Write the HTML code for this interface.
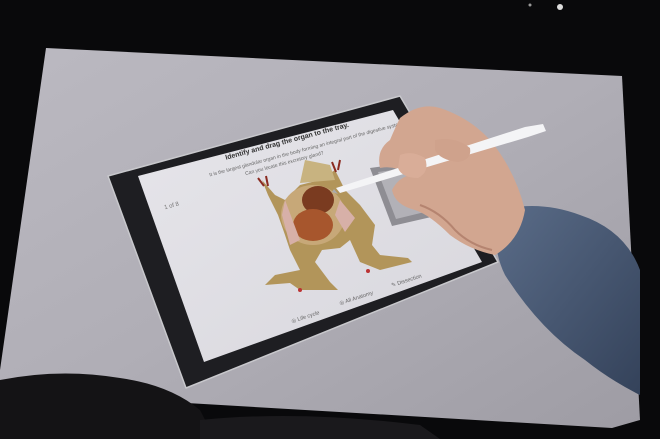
<!DOCTYPE html>
<html><head><meta charset="utf-8"><style>
html,body{margin:0;padding:0;background:#0a0a0c;width:660px;height:439px;overflow:hidden}
svg{display:block}
</style></head><body>
<svg width="660" height="439" viewBox="0 0 660 439" xmlns="http://www.w3.org/2000/svg">
<defs>
<linearGradient id="tbl" x1="0" y1="0" x2="1" y2="1">
<stop offset="0" stop-color="#bbb9c1"/><stop offset="0.5" stop-color="#b0aeb6"/><stop offset="1" stop-color="#9e9ca4"/>
</linearGradient>
<linearGradient id="scr" x1="0" y1="0" x2="1" y2="1">
<stop offset="0" stop-color="#e6e5ea"/><stop offset="1" stop-color="#d8d7dd"/>
</linearGradient>
<linearGradient id="sleeve" x1="0" y1="0" x2="1" y2="1">
<stop offset="0" stop-color="#5a6c88"/><stop offset="1" stop-color="#34425a"/>
</linearGradient>
</defs>
<rect width="660" height="439" fill="#09090b"/>
<polygon points="46,48 622,76 640,420 612,428 0,392 0,370" fill="url(#tbl)"/>
<path d="M0,380 Q60,368 120,378 Q170,385 200,410 L215,439 L0,439 Z" fill="#141315"/>
<path d="M200,420 Q300,410 420,425 L440,439 L200,439 Z" fill="#1a191c"/>
<polygon points="108,176 400,96 498,262 186,388" fill="#1e1e22" stroke="#c8c8cc" stroke-width="1.5" stroke-linejoin="round"/>
<polygon points="138,176 393,110 482,262 204,362" fill="url(#scr)"/>
<polygon points="370,168 428,160 440,215 392,226" fill="#8e8d93"/>
<polygon points="378,172 424,166 433,210 396,219" fill="#b2b1b7"/>
<g font-family="Liberation Sans, sans-serif" fill="#333" transform="rotate(-15 270 150)">
<text x="225" y="148" font-size="7" font-weight="bold">Identify and drag the organ to the tray.</text>
<text x="205" y="160" font-size="5" fill="#666">It is the largest glandular organ in the body forming an integral part of the digestive system.</text>
<text x="240" y="168" font-size="5" fill="#666">Can you locate this excretory gland?</text>
<text x="153" y="180" font-size="6" fill="#777">1 of 8</text>
</g>
<g font-family="Liberation Sans, sans-serif" font-size="5.5" fill="#666">
<text x="292" y="323" transform="rotate(-18 292 323)">◎ Life cycle</text>
<text x="340" y="305" transform="rotate(-18 340 305)">◎ All Anatomy</text>
<text x="392" y="287" transform="rotate(-18 392 287)">✎ Dissection</text>
</g>
<g>
<path d="M262,180 L275,195 L285,200 L300,185 L320,180 L335,170 L345,190 L360,205 L375,225 L372,245 L380,255 L408,258 L412,262 L380,270 L360,262 L350,240 L340,248 L322,250 L315,262 L330,282 L338,290 L300,290 L290,283 L265,285 L275,275 L300,270 L290,250 L285,235 L278,215 L268,195 Z" fill="#b2955a"/>
<ellipse cx="313" cy="215" rx="32" ry="30" fill="#c7a878"/>
<ellipse cx="318" cy="200" rx="16" ry="14" fill="#7a3b20"/>
<ellipse cx="313" cy="225" rx="20" ry="16" fill="#a7562d"/>
<path d="M285,200 L300,240 L290,245 L282,215 Z" fill="#d7b0a8"/>
<path d="M340,200 L355,218 L345,232 L335,215 Z" fill="#d7b0a8"/>
<path d="M305,160 L330,165 L335,180 L300,183 Z" fill="#c8b380"/>
<path d="M258,178 l6,8 M266,176 l2,10 M332,162 l4,10 M340,160 l-2,10" stroke="#8a2a20" stroke-width="2"/>
<circle cx="300" cy="290" r="2" fill="#b33"/><circle cx="368" cy="271" r="2" fill="#b33"/>
</g>
<path d="M500,210 Q540,200 580,215 Q625,230 640,270 L640,395 Q610,380 585,360 Q540,330 505,275 Q490,245 500,210 Z" fill="url(#sleeve)"/>
<path d="M400,118 Q420,102 440,108 Q470,118 490,140 Q515,170 525,210 Q520,240 495,255 Q470,250 450,235 Q430,215 415,210 Q395,205 392,190 Q398,178 410,175 Q395,165 380,168 Q376,150 390,140 Q395,128 400,118 Z" fill="#d2a690"/>
<path d="M420,205 Q440,212 455,230 Q470,245 492,250" fill="none" stroke="#b58470" stroke-width="2"/>
<path d="M336,188 L340,193 L528,137 L546,131 L543,124 L525,127 Z" fill="#f4f4f6"/>
<path d="M334,189 l4,5 l-6,-2 z" fill="#aaa"/>
<path d="M400,155 Q412,150 425,158 Q430,172 418,178 Q402,178 398,168 Z" fill="#d9ad98"/>
<path d="M435,140 Q455,136 470,148 Q472,160 458,162 Q440,160 435,150 Z" fill="#cfa28c"/>
<circle cx="560" cy="7" r="3" fill="#ddd"/><circle cx="530" cy="5" r="1.5" fill="#999"/>
</svg>
</body></html>
